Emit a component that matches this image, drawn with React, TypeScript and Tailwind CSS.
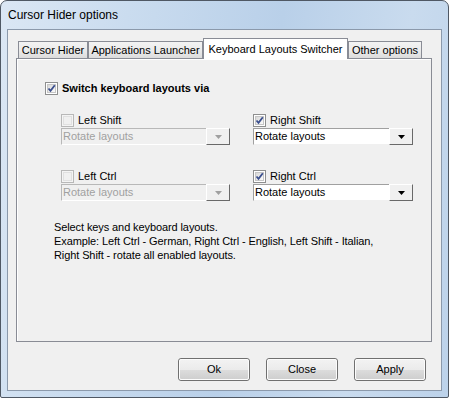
import React from 'react'

const font = { fontFamily: '"Liberation Sans", Arial, sans-serif' }

function Check({ checked, disabled }: { checked?: boolean; disabled?: boolean }) {
    return (
        <div
            className={`w-[13px] h-[13px] border p-[1px] shrink-0 ${disabled ? 'border-[#b8b8b8] bg-[#f4f4f4]' : 'border-[#8e8f8f] bg-white'}`}
        >
            <div
                className={`w-full h-full border relative ${disabled ? 'border-[#e0e0e0] bg-[#f0f0f0]' : 'border-[#c6c6c6] bg-gradient-to-br from-[#d8d8d8] to-[#fbfbfb]'}`}
            >
                {checked && (
                    <svg viewBox="0 0 9 9" className="absolute left-[-1px] top-[-1px] w-[9px] h-[9px]">
                        <path d="M1.5 4.5 L3.5 6.8 L7.8 1.2" fill="none" stroke="#3b4f8e" strokeWidth="1.8" />
                    </svg>
                )}
            </div>
        </div>
    )
}

function Combo({ disabled, width }: { disabled?: boolean; width: number }) {
    return (
        <div className="flex h-[17px]" style={{ width }}>
            <div
                className={`flex-1 flex items-center pl-[1px] text-[11px] leading-none border-t border-l ${disabled ? 'border-[#b8b8b8] bg-[#f0f0f0] text-[#a0a0a0] border-b border-b-white' : 'border-[#a0a0a0] bg-white text-black border-b border-b-[#f0f0f0]'}`}
            >
                Rotate layouts
            </div>
            <div className="w-[24px] h-[17px] border-t border-l border-white border-r border-b border-r-[#696969] border-b-[#696969] bg-[#f0f0f0] flex items-center justify-center">
                <svg width="7" height="4" viewBox="0 0 7 4">
                    <path d="M0 0 H7 L3.5 4 Z" fill={disabled ? '#a0a0a0' : '#000'} />
                </svg>
            </div>
        </div>
    )
}

function Tab({ label, width, active }: { label: string; width: number; active?: boolean }) {
    if (active) {
        return (
            <div
                className="h-[21px] -mb-[1px] border border-b-0 border-[#898c95] bg-white flex items-start justify-center pt-[2px] text-[11px] relative z-10"
                style={{ width }}
            >
                {label}
            </div>
        )
    }
    return (
        <div
            className="h-[17px] border border-b-0 border-[#898c95] bg-gradient-to-b from-[#f3f3f3] via-[#ebebeb] to-[#dcdcdc] flex items-center justify-center text-[11px]"
            style={{ width }}
        >
            {label}
        </div>
    )
}

function Btn({ label }: { label: string }) {
    return (
        <div className="w-[72px] h-[23px] rounded-[3px] border border-[#707070] flex overflow-hidden">
            <div className="flex-1 flex items-center justify-center text-[11px] border border-[#fcfcfc] rounded-[2px] bg-[linear-gradient(#f2f2f2_0%,#ebebeb_50%,#dddddd_51%,#cfcfcf_100%)]">
                {label}
            </div>
        </div>
    )
}

export default function App() {
    return (
        <div className="w-[449px] h-[398px] bg-white" style={font}>
            <div className="w-[449px] h-[398px] rounded-t-[7px] rounded-b-[2px] border border-[#4f5864] bg-[linear-gradient(100deg,#dbe7f4_0%,#cadcef_25%,#b9d0e9_55%,#c9dbee_80%,#bcd2ea_100%)] flex flex-col">
                <div className="h-[28px] pl-[7px] flex items-center text-[12px] text-black">
                    Cursor Hider options
                </div>
                <div className="mx-[6px] h-[362px] border border-[#8b99ab] bg-[#f0f0f0] flex flex-col text-black">
                    <div className="pt-[7px] pl-[8px]">
                        <div className="flex items-end pl-[2px] h-[21px]">
                            <Tab label="Cursor Hider" width={70} />
                            <Tab label="Applications Launcher" width={115} />
                            <Tab label="Keyboard Layouts Switcher" width={145} active />
                            <Tab label="Other options" width={74} />
                        </div>
                        <div className="w-[416px] h-[284px] border border-[#898c95]">
                            <div className="w-full h-full border-l border-t border-white flex flex-col pl-[27px] pt-[22px]">
                                <div className="flex items-center gap-[4px]">
                                    <Check checked />
                                    <span className="text-[11px] font-bold leading-none">Switch keyboard layouts via</span>
                                </div>
                                <div className="flex pl-[16px] pt-[19px] gap-[23px]">
                                    <div className="flex flex-col w-[169px]">
                                        <div className="flex items-center gap-[4px] h-[13px]">
                                            <Check disabled />
                                            <span className="text-[11px] leading-none">Left Shift</span>
                                        </div>
                                        <div className="mt-[1px]">
                                            <Combo disabled width={169} />
                                        </div>
                                        <div className="flex items-center gap-[4px] h-[13px] mt-[25px]">
                                            <Check disabled />
                                            <span className="text-[11px] leading-none">Left Ctrl</span>
                                        </div>
                                        <div className="mt-[1px]">
                                            <Combo disabled width={169} />
                                        </div>
                                    </div>
                                    <div className="flex flex-col w-[160px]">
                                        <div className="flex items-center gap-[4px] h-[13px]">
                                            <Check checked />
                                            <span className="text-[11px] leading-none">Right Shift</span>
                                        </div>
                                        <div className="mt-[1px]">
                                            <Combo width={160} />
                                        </div>
                                        <div className="flex items-center gap-[4px] h-[13px] mt-[25px]">
                                            <Check checked />
                                            <span className="text-[11px] leading-none">Right Ctrl</span>
                                        </div>
                                        <div className="mt-[1px]">
                                            <Combo width={160} />
                                        </div>
                                    </div>
                                </div>
                                <div className="pl-[9px] pt-[19px] text-[11px] leading-[14px] tracking-[-0.1px]">
                                    <div>Select keys and keyboard layouts.</div>
                                    <div>Example: Left Ctrl - German, Right Ctrl - English, Left Shift - Italian,</div>
                                    <div>Right Shift - rotate all enabled layouts.</div>
                                </div>
                            </div>
                        </div>
                    </div>
                    <div className="flex justify-end gap-[16px] pr-[15px] pt-[16px]">
                        <Btn label="Ok" />
                        <Btn label="Close" />
                        <Btn label="Apply" />
                    </div>
                </div>
            </div>
        </div>
    )
}
